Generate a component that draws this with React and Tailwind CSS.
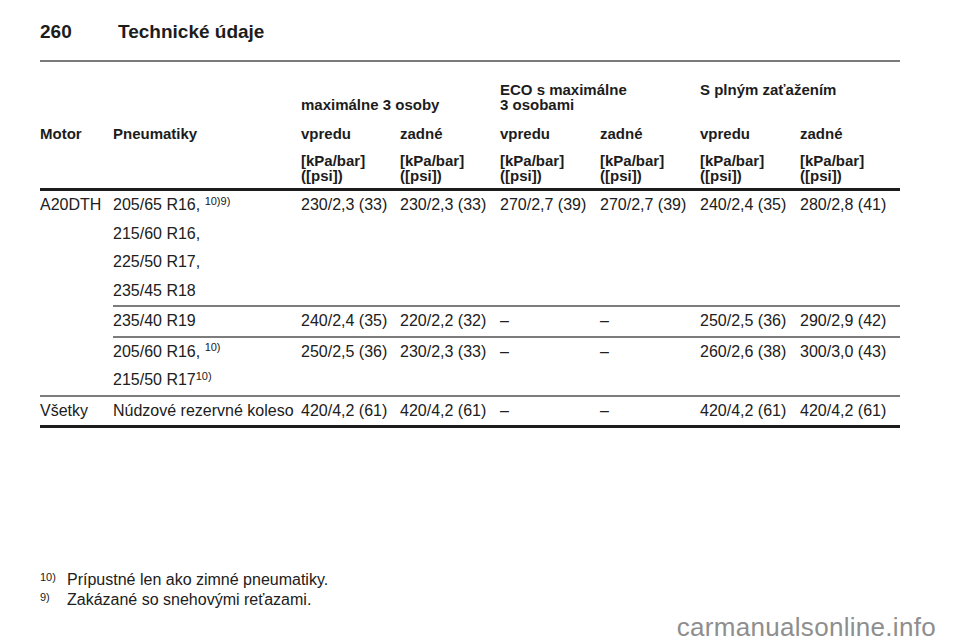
import React from "react";

const GRID = "grid grid-cols-[188px_99px_100px_100px_100px_100px_100px]";

const ROWS = [
  {
    motor: "A20DTH",
    groups: [
      {
        tires: [
          <>205/65 R16, <sup className="text-[11px]">10)9)</sup></>,
          "215/60 R16,",
          "225/50 R17,",
          "235/45 R18",
        ],
        values: ["230/2,3 (33)", "230/2,3 (33)", "270/2,7 (39)", "270/2,7 (39)", "240/2,4 (35)", "280/2,8 (41)"],
      },
      {
        tires: ["235/40 R19"],
        values: ["240/2,4 (35)", "220/2,2 (32)", "–", "–", "250/2,5 (36)", "290/2,9 (42)"],
      },
      {
        tires: [
          <>205/60 R16, <sup className="text-[11px]">10)</sup></>,
          <>215/50 R17<sup className="text-[11px]">10)</sup></>,
        ],
        values: ["250/2,5 (36)", "230/2,3 (33)", "–", "–", "260/2,6 (38)", "300/3,0 (43)"],
      },
    ],
  },
  {
    motor: "Všetky",
    groups: [
      {
        tires: ["Núdzové rezervné koleso"],
        values: ["420/4,2 (61)", "420/4,2 (61)", "–", "–", "420/4,2 (61)", "420/4,2 (61)"],
      },
    ],
  },
];

function Group({ g, last }) {
  return (
    <div className={`${GRID} ${last ? "" : "border-b-2 border-[#7c7c7c]"}`}>
      <div>
        {g.tires.map((t, i) => (
          <div key={i} className="h-[28.5px] leading-[28.5px] whitespace-nowrap">{t}</div>
        ))}
      </div>
      {g.values.map((v, i) => (
        <div key={i} className="h-[28.5px] leading-[28.5px] whitespace-nowrap">{v}</div>
      ))}
    </div>
  );
}

export default function App() {
  return (
    <div className="w-[960px] h-[642px] overflow-hidden bg-white text-[#202020] font-['Liberation_Sans',Arial,sans-serif]">
      <div className="ml-[40px] w-[860px]">
        <div className="mt-[20px] flex h-[24px] items-center text-[19px] font-bold leading-[24px] text-[#1c1c1c]">
          <span className="w-[78px]">260</span>
          <span>Technické údaje</span>
        </div>
        <div className="mt-[16px] h-[2px] bg-[#7a7a7a]" />

        {/* column headings */}
        <div className="mt-[20px] text-[15px] font-bold leading-[15px] text-[#1c1c1c]">
          <div className="grid h-[30px] grid-cols-[73px_188px_199px_200px_200px]">
            <div />
            <div />
            <div className="self-end">maximálne 3 osoby</div>
            <div>
              ECO s maximálne
              <br />3 osobami
            </div>
            <div>S plným zaťažením</div>
          </div>
          <div className="mt-[14px] grid grid-cols-[73px_188px_99px_100px_100px_100px_100px_100px]">
            <div>Motor</div>
            <div>Pneumatiky</div>
            <div>vpredu</div>
            <div>zadné</div>
            <div>vpredu</div>
            <div>zadné</div>
            <div>vpredu</div>
            <div>zadné</div>
          </div>
          <div className="mt-[12px] grid grid-cols-[73px_188px_99px_100px_100px_100px_100px_100px]">
            <div />
            <div />
            {[0, 1, 2, 3, 4, 5].map((i) => (
              <div key={i}>
                [kPa/bar]
                <br />([psi])
              </div>
            ))}
          </div>
        </div>
        <div className="mt-[5px] h-[3px] bg-[#1c1c1c]" />

        {/* data */}
        <div className="text-[16px]">
          {ROWS.map((r, ri) => (
            <div
              key={ri}
              className={`flex ${ri === ROWS.length - 1 ? "border-b-[3px] border-[#1c1c1c]" : "border-b-2 border-[#7c7c7c]"}`}
            >
              <div className="w-[73px] h-[28.5px] leading-[28.5px]">{r.motor}</div>
              <div className="flex-1">
                {r.groups.map((g, gi) => (
                  <Group key={gi} g={g} last={gi === r.groups.length - 1} />
                ))}
              </div>
            </div>
          ))}
        </div>

        {/* footnotes */}
        <div className="mt-[142px] text-[16px] leading-[20px]">
          <div className="flex">
            <span className="w-[27px]">
              <sup className="text-[11px] -top-[4px]">10)</sup>
            </span>
            <span>Prípustné len ako zimné pneumatiky.</span>
          </div>
          <div className="flex">
            <span className="w-[27px]">
              <sup className="text-[11px] -top-[4px]">9)</sup>
            </span>
            <span>Zakázané so snehovými reťazami.</span>
          </div>
        </div>
      </div>
      <div className="mt-[2px] pr-[24px] text-right text-[26px] leading-[30px] tracking-[0.3px] text-[#8e8e8e]">
        carmanualsonline.info
      </div>
    </div>
  );
}
